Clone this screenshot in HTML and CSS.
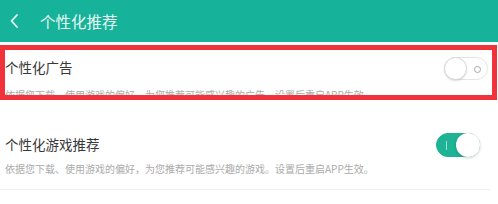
FILE: index.html
```html
<!DOCTYPE html>
<html lang="zh-CN">
<head>
  <meta charset="UTF-8">
  <meta name="viewport" content="width=device-width, initial-scale=1.0">
  <title>个性化推荐</title>
  <link rel="stylesheet" href="styles.css">
</head>
<body>
  <div class="topbar">
    <span class="back">
      <svg width="10" height="16" viewBox="0 0 10 16"><path d="M8 2 L2.5 8 L8 14" fill="none" stroke="#e6f7f3" stroke-width="1.8" stroke-linecap="round" stroke-linejoin="round"/></svg>
    </span>
    <h1>个性化推荐</h1>
  </div>

  <div class="list">
    <div class="item marked">
      <div class="item-head">
        <span class="item-title">个性化广告</span>
        <span class="switch"><span class="knob"></span><span class="ring"></span></span>
      </div>
      <p class="item-desc">依据您下载、使用游戏的偏好，为您推荐可能感兴趣的广告。设置后重启APP生效。</p>
    </div>

    <div class="item">
      <div class="item-head">
        <span class="item-title">个性化游戏推荐</span>
        <span class="switch on"><span class="bar"></span><span class="knob"></span></span>
      </div>
      <p class="item-desc">依据您下载、使用游戏的偏好，为您推荐可能感兴趣的游戏。设置后重启APP生效。</p>
    </div>
  </div>
</body>
</html>
```

FILE: styles.css
```css
* {
  margin: 0;
  padding: 0;
  box-sizing: border-box;
}

body {
  font-family: "Noto Sans CJK SC", "Noto Sans", sans-serif;
  background: #fff;
  width: 498px;
  height: 204px;
  overflow: hidden;
}

.topbar {
  height: 42px;
  background: #17b29a;
  display: flex;
  align-items: center;
  padding-left: 9px;
}

.back {
  display: flex;
  width: 31px;
}

.topbar h1 {
  color: #e6f7f3;
  font-size: 15.5px;
  font-weight: normal;
}

.list {
  padding-top: 3px;
}

.item {
  padding: 33px 10px 13px 5px;
  border-bottom: 1px solid #f0f0f0;
  margin-right: 8px;
}

.item.marked {
  height: 55px;
  padding: 6px 4px 0 0;
  border: 5px solid #f2323a;
  overflow: hidden;
  margin-right: 1px;
}

.item.marked .item-desc {
  margin-top: 8px;
}

.item-head {
  display: flex;
  justify-content: space-between;
  align-items: center;
  height: 24px;
}

.item-title {
  font-size: 13.5px;
  color: #383838;
  line-height: 20px;
  margin-top: -3px;
}

.item-desc {
  font-size: 10px;
  color: #aaa;
  line-height: 14px;
  margin-top: 5px;
  white-space: nowrap;
}

.switch {
  position: relative;
  width: 44px;
  height: 23px;
  border-radius: 12px;
  border: 1px solid #e4e4e4;
  background: #fff;
}

.switch .knob {
  position: absolute;
  top: -1px;
  left: -1px;
  width: 23px;
  height: 23px;
  border-radius: 50%;
  background: #fff;
  border: 1px solid #d8d8d8;
  box-shadow: 0 1px 2px rgba(0, 0, 0, 0.12);
}

.switch .ring {
  position: absolute;
  top: 8px;
  right: 6px;
  width: 7px;
  height: 7px;
  border-radius: 50%;
  border: 1px solid #a8a8a8;
}

.switch.on {
  height: 24px;
  background: #1db394;
  border-color: #1db394;
}

.switch.on .knob {
  left: auto;
  right: -1px;
  width: 24px;
  height: 24px;
  border: none;
  box-shadow: 0 1px 3px rgba(0, 0, 0, 0.2);
}

.switch.on .bar {
  position: absolute;
  left: 9px;
  top: 7px;
  width: 1px;
  height: 9px;
  background: rgba(255, 255, 255, 0.6);
}
```
